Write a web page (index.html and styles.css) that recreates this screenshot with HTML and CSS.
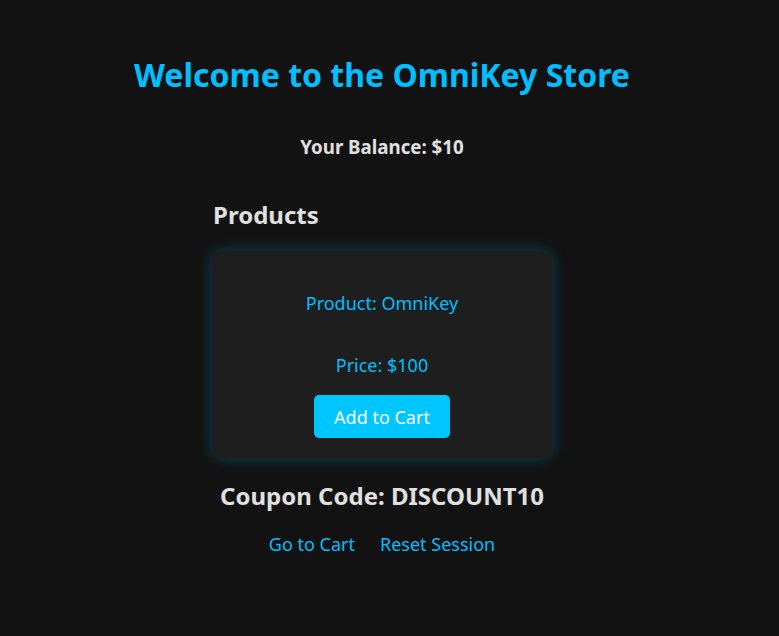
FILE: index.html
```html
<!DOCTYPE html>
<html>
<head>
<meta charset="utf-8">
<link rel="stylesheet" href="styles.css">
</head>
<body>
<div class="page">
  <h1 class="title">Welcome to the OmniKey Store</h1>
  <p class="balance">Your Balance: $10</p>
  <section class="products">
    <h2 class="section-title">Products</h2>
    <div class="card">
      <p class="card-line">Product: OmniKey</p>
      <p class="card-line price">Price: $100</p>
      <button class="btn">Add to Cart</button>
    </div>
  </section>
  <h2 class="coupon">Coupon Code: DISCOUNT10</h2>
  <nav class="links">
    <a href="#" class="link">Go to Cart</a>
    <a href="#" class="link">Reset Session</a>
  </nav>
</div>
</body>
</html>
```

FILE: styles.css
```css
html, body {
  margin: 0;
  padding: 0;
  background: #121212;
}
body {
  font-family: "Noto Sans", "Open Sans", sans-serif;
  color: #e0e0e0;
}
.page {
  width: 764px;
  text-align: center;
  padding-top: 53px;
}
.title {
  margin: 0;
  font-size: 32px;
  line-height: 44px;
  font-weight: 700;
  color: #00bfff;
}
.balance {
  margin: 38px 0 0;
  font-size: 18.72px;
  line-height: 24px;
  font-weight: 700;
  color: #e0e0e0;
}
.products {
  width: 340px;
  margin: 40px auto 0;
  text-align: left;
}
.section-title {
  margin: 0 0 0 1px;
  font-size: 24px;
  line-height: 32px;
  font-weight: 700;
}
.card {
  margin-top: 20px;
  background: #1e1e1e;
  border-radius: 10px;
  box-shadow: 0 0 15px rgba(0, 191, 255, 0.3);
  padding: 40px 20px 20px;
  text-align: center;
}
.card-line {
  margin: 0;
  font-size: 18px;
  line-height: 24px;
  color: #00bfff;
}
.price {
  margin-top: 38px;
}
.btn {
  margin-top: 18px;
  background: #00c6ff;
  color: #ffffff;
  border: none;
  border-radius: 5px;
  font-family: inherit;
  font-size: 18px;
  line-height: 24px;
  padding: 10px 20px 9px;
}
.coupon {
  margin: 22px 0 0;
  font-size: 24px;
  line-height: 32px;
  font-weight: 700;
}
.links {
  margin-top: 20px;
  display: flex;
  justify-content: center;
  gap: 25px;
}
.link {
  color: #00bfff;
  text-decoration: none;
  font-size: 18px;
  line-height: 24px;
}
```
